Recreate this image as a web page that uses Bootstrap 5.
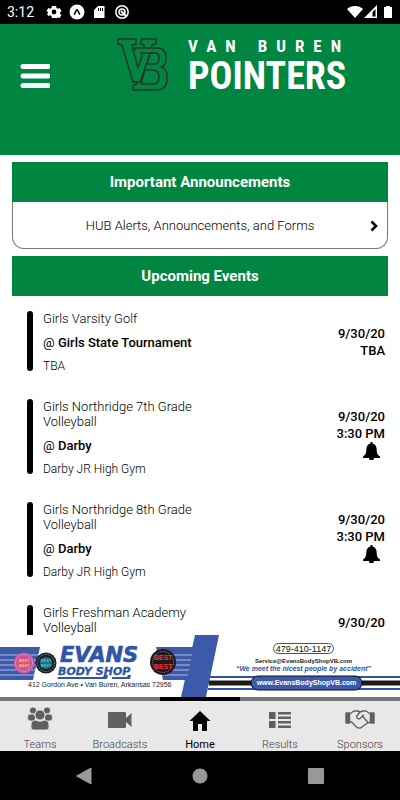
<!DOCTYPE html>
<html lang="en">
<head>
<meta charset="utf-8">
<meta name="viewport" content="width=device-width, initial-scale=1">
<title>Van Buren Pointers</title>
<link href="https://cdn.jsdelivr.net/npm/bootstrap@5.3.0/dist/css/bootstrap.min.css" rel="stylesheet">
<style>
  :root { --team-green: #008641; }
  body { font-family: Roboto, "Liberation Sans", sans-serif; font-size: 13px; font-weight: 300; line-height: 15px; color: #000; background: #fff; }
  svg { display: block; }
  .status-bar { background: #000; color: #fff; height: 24px; font-size: 14px; font-weight: 400; padding: 0 7px; }
  .team-header { background: var(--team-green); padding: 12px 20px 57px; }
  .menu-btn { margin-top: 14px; }
  .team-brand { gap: 20px; margin: 2px 0 0 67px; color: #fff; font-family: "Roboto Condensed", "Liberation Sans Narrow", "DejaVu Sans Condensed", sans-serif; font-weight: 700; }
  .brand-city { font-size: 17px; line-height: 16px; letter-spacing: 9px; white-space: nowrap; }
  .brand-name { font-size: 38px; line-height: 44px; }
  .section-title { background: var(--team-green); color: #fff; font-size: 15px; font-weight: 700; line-height: 20px; padding: 10px; margin: 0; }
  .announcements { margin: 7px 0; }
  .announce-link { font-size: 13px; color: #000; border: 1px solid #777; border-top: 0; border-radius: 0 0 12px 12px; padding: 16px 9px 15px; }
  .event-list { margin-top: 15px; padding: 0 3px 0 15px; gap: 26px; }
  .event-bar { width: 6px; border-radius: 3px; background: #000; margin: 0 10px 2px 0; }
  .event-text { width: 160px; }
  .event-place { margin: 9px 0; font-weight: 400; }
  .event-place b { font-weight: 500; }
  .event-venue { font-size: 12px; line-height: 14px; }
  .event-when { line-height: 17px; font-weight: 500; font-size: 13px; }
  .bell-btn { margin: 0 5px 8px 0; }
  .tab-bar { background: #e8e8e8; border-top: 4px solid #777; }
  .tab-link { color: #404040; font-size: 11px; line-height: 12px; padding: 6px 0 0; height: 50px; }
  .tab-link.active { color: #000; margin-top: -4px; border-top: 4px solid #000; height: 54px; font-weight: 400; }
  .system-bar { background: #000; height: 49px; padding: 0 26px; }
</style>
<script src="https://cdn.jsdelivr.net/npm/bootstrap@5.3.0/dist/js/bootstrap.bundle.min.js"></script>
</head>
<body class="d-flex flex-column vh-100 overflow-hidden">

<div class="status-bar d-flex align-items-center justify-content-between flex-shrink-0">
  <div class="d-flex align-items-center">
    <span class="me-2 pe-1">3:12</span>
    <svg width="84" height="16" viewBox="0 0 84 16" fill="#fff">
      <path fill-rule="evenodd" d="M6 2h4l.5 2 1.300.8 1.900-.7 1.800 3-1.500 1.300v1.400l1.500 1.300-1.800 3-1.900-.7-1.300.8L10 14H6l-.5-1.900-1.300-.8-1.900.7-1.800-3L2 9.700V8.300L.5 7l1.800-3 1.900.7L5.500 4ZM8 5.600a2.400 2.400 0 1 0 0 4.800 2.400 2.400 0 0 0 0-4.800Z"/>
      <circle cx="31" cy="8" r="7.500"/><path d="M28 10.500c1.500-1 2-5 3-5s1.500 4 3 5" fill="none" stroke="#000" stroke-width="1.600"/>
      <path fill-rule="evenodd" d="M52 2h6.500v12H48V6Zm0 2v3h1V4Zm2 0v3h1V4Zm2 0v3h1V4Z"/>
      <g fill="none" stroke="#fff" stroke-width="1.500"><circle cx="76" cy="8" r="6.200"/><circle cx="76" cy="8" r="3"/><path d="m75 7 5 5" stroke-width="2"/></g>
    </svg>
  </div>
  <svg width="46" height="14" viewBox="0 0 46 14" fill="#fff">
    <path d="M0 4C4 0 12 0 16 4L8 13Z"/>
    <path d="M30 0v13H17Z"/><path d="M28.500 4v7.500h-3V7Z" fill="#000"/>
    <path d="M37 2h2V1h4v1h2v11h-8Z"/>
  </svg>
</div>

<header class="team-header d-flex align-items-start flex-shrink-0">
  <button type="button" class="menu-btn btn p-0 border-0" aria-label="Menu" data-bs-toggle="button">
    <svg width="30" height="48" viewBox="0 0 30 48"><path d="M3 16.500h25M3 26h25M3 35.500h25" stroke="#fff" stroke-width="5" stroke-linecap="round"/></svg>
  </button>
  <div class="team-brand d-flex">
    <svg width="51" height="54" viewBox="0 0 51 54" fill="none" stroke="#27332b" stroke-width="1.400" stroke-linejoin="round" aria-hidden="true">
      <path d="M1 1h18v5l-4 1 2 8 4 15 4-12-1-3h12"/>
      <path d="M19 12 17 10M24 1h15v5l-4 1-1 3M24 1v5l3 1v3"/>
      <path d="M1 1v5l4 1 11 37h7l10-28"/>
      <path d="M17 10h23c7 0 9 4 9 9v3c0 4-2 6-5 7 4 1 6 4 6 9v3c0 7-4 11-11 11H16v-5l4-1v-3"/>
      <path d="M33 15h5c3 0 4 2 4 5s-1 6-4 6h-8ZM28 32h8c4 0 6 3 6 7s-2 7-6 7H24Z"/>
    </svg>
    <div>
      <div class="brand-city">VAN BUREN</div>
      <div class="brand-name">POINTERS</div>
    </div>
  </div>
</header>

<main class="flex-grow-1 overflow-hidden px-2" style="min-height:0">
  <div class="px-1">
    <section class="announcements text-center">
      <h2 class="section-title">Important Announcements</h2>
      <a href="#announcements" class="announce-link d-flex align-items-center text-decoration-none">
        <span class="flex-grow-1 ps-2">HUB Alerts, Announcements, and Forms</span>
        <svg width="8" height="12" viewBox="0 0 8 12" fill="none" stroke="#000" stroke-width="2.600"><path d="m1.500 1.500 4.500 4.500-4.500 4.500"/></svg>
      </a>
    </section>
    <section>
      <h2 class="section-title text-center">Upcoming Events</h2>
      <div class="event-list d-flex flex-column">
        <article class="d-flex">
          <div class="event-bar"></div>
          <div class="event-text">
            <div>Girls Varsity Golf</div>
            <div class="event-place">@ <b>Girls State Tournament</b></div>
            <div class="event-venue">TBA</div>
          </div>
          <div class="event-when ms-auto text-end align-self-center">9/30/20<br>TBA</div>
        </article>
        <article class="d-flex">
          <div class="event-bar"></div>
          <div class="event-text">
            <div>Girls Northridge 7th Grade Volleyball</div>
            <div class="event-place">@ <b>Darby</b></div>
            <div class="event-venue">Darby JR High Gym</div>
          </div>
          <div class="event-when ms-auto align-self-center d-flex flex-column align-items-end">
            <span>9/30/20</span><span>3:30 PM</span>
            <button type="button" class="bell-btn btn p-0 border-0" aria-label="Set reminder">
              <svg width="17" height="18" viewBox="0 0 17 18"><path d="M7.500 0h2v1.500c3 .7 4.200 3 4.200 6 0 4 1 5.500 3.300 7V16h-6a2.500 2.500 0 0 1-5 0H0v-1.500c2.300-1.500 3.300-3 3.300-7 0-3 1.200-5.300 4.200-6Z"/></svg>
            </button>
          </div>
        </article>
        <article class="d-flex">
          <div class="event-bar"></div>
          <div class="event-text">
            <div>Girls Northridge 8th Grade Volleyball</div>
            <div class="event-place">@ <b>Darby</b></div>
            <div class="event-venue">Darby JR High Gym</div>
          </div>
          <div class="event-when ms-auto align-self-center d-flex flex-column align-items-end">
            <span>9/30/20</span><span>3:30 PM</span>
            <button type="button" class="bell-btn btn p-0 border-0" aria-label="Set reminder">
              <svg width="17" height="18" viewBox="0 0 17 18"><path d="M7.500 0h2v1.500c3 .7 4.200 3 4.200 6 0 4 1 5.500 3.300 7V16h-6a2.500 2.500 0 0 1-5 0H0v-1.500c2.300-1.500 3.300-3 3.300-7 0-3 1.200-5.300 4.200-6Z"/></svg>
            </button>
          </div>
        </article>
        <article class="d-flex">
          <div class="event-bar"></div>
          <div class="event-text">
            <div>Girls Freshman Academy Volleyball</div>
            <div class="event-place">@ <b>Darby</b></div>
            <div class="event-venue">Darby JR High Gym</div>
          </div>
          <div class="event-when ms-auto align-self-center d-flex flex-column align-items-end">
            <span>9/30/20</span><span>3:30 PM</span>
            <button type="button" class="bell-btn btn p-0 border-0" aria-label="Set reminder">
              <svg width="17" height="18" viewBox="0 0 17 18"><path d="M7.500 0h2v1.500c3 .7 4.200 3 4.200 6 0 4 1 5.500 3.300 7V16h-6a2.500 2.500 0 0 1-5 0H0v-1.500c2.300-1.500 3.300-3 3.300-7 0-3 1.200-5.300 4.200-6Z"/></svg>
            </button>
          </div>
        </article>
      </div>
    </section>
  </div>
</main>

<a href="#sponsor" class="d-block flex-shrink-0 bg-white" aria-label="Evans Body Shop">
  <svg class="w-100 h-auto" viewBox="0 0 400 62" font-family="Liberation Sans, sans-serif" font-weight="400">
    <g fill="#3c5aa9">
      <path d="M0 12h40l-7 33H0ZM156 12h38l-5 33h-26Z"/>
      <path d="M195 0h24l-13 62h-25Z"/>
    </g>
    <path d="M0 20h40M0 25h40M0 30h40M0 35h40M0 40h40M156 20h36M156 25h35M156 30h34M156 35h33M156 40h32" stroke="#fff" stroke-opacity=".6"/>
    <g><circle cx="24" cy="28" r="10.500" fill="#c9569f"/><circle cx="24" cy="28" r="8.500" fill="none" stroke="#f0b9dc" stroke-dasharray="1 1"/><circle cx="24" cy="28" r="6" fill="#d9519a"/></g>
    <g><circle cx="46" cy="28" r="10.500" fill="#1b2226"/><circle cx="46" cy="28" r="8.500" fill="none" stroke="#7f9ba5" stroke-dasharray="1 1"/><circle cx="46" cy="28" r="6" fill="#256d7d"/></g>
    <g><circle cx="163" cy="27" r="13" fill="#1d1a1b"/><circle cx="163" cy="27" r="10.500" fill="none" stroke="#8c8586" stroke-dasharray="1 1"/></g>
    <g font-weight="700" text-anchor="middle">
      <g font-size="4" fill="#ffc23d"><text x="24" y="27">BEST</text><text x="24" y="32">BEST</text></g>
      <g font-size="4" fill="#42c3d8"><text x="46" y="27">BEST</text><text x="46" y="32">BEST</text></g>
      <g font-size="7" fill="#f0303f"><text x="163" y="25">BEST</text><text x="163" y="34">BEST</text></g>
    </g>
    <g fill="#2f55a8" font-family="DejaVu Sans, sans-serif" font-weight="700" font-style="italic">
      <text x="60" y="27" font-size="21" stroke="#2f55a8" stroke-width=".6">EVANS</text>
      <text x="58" y="40" font-size="11" stroke="#2f55a8" stroke-width=".3">BODY SHOP</text>
      <path d="M58 42h45l1-2h4l-1 4H57.500ZM112 42h15l1-2h3l-1 4h-18Z"/>
    </g>
    <text x="28" y="52" font-size="7" fill="#222">412 Gordon Ave • Van Buren, Arkansas 72956</text>
    <rect x="273.500" y="8.500" width="60" height="10" rx="5" fill="#fff" stroke="#2f55a8"/>
    <g text-anchor="middle">
      <text x="303.500" y="17" font-size="9" fill="#111">479-410-1147</text>
      <text x="303.500" y="28" font-size="6" font-weight="700" fill="#222">Service@EvansBodyShopVB.com</text>
      <text x="303.500" y="36" font-size="7" font-weight="700" font-style="italic" fill="#2f55a8">“We meet the nicest people by accident”</text>
    </g>
    <path d="M210 42h190M208 54h192" stroke="#2f55a8" stroke-width="2"/>
    <path d="M209 48h191" stroke="#1b1b1b" stroke-width="5"/>
    <rect x="251" y="41" width="111" height="14" rx="7" fill="#3c5aa9" stroke="#111"/>
    <text x="306.500" y="50" font-size="7" font-weight="700" fill="#fff" text-anchor="middle">www.EvansBodyShopVB.com</text>
  </svg>
</a>

<nav class="tab-bar nav nav-fill flex-nowrap flex-shrink-0" aria-label="Main">
  <a href="#teams" class="tab-link col d-flex flex-column align-items-center justify-content-between text-decoration-none">
    <svg width="26" height="24" viewBox="0 0 26 24" fill="#606060" stroke="#e8e8e8" stroke-width=".8">
      <circle cx="6" cy="3.500" r="3.500"/><circle cx="20" cy="3.500" r="3.500"/><rect x=".5" y="7" width="8" height="7" rx="3"/><rect x="17.500" y="7" width="8" height="7" rx="3"/><circle cx="13" cy="8" r="5"/><path d="M8 13q5 2.500 10 0c4 1 4 4 4 7 0 2-1 3-3 3H7c-2 0-3-1-3-3 0-3 0-6 4-7Z"/>
    </svg>Teams
  </a>
  <a href="#broadcasts" class="tab-link col d-flex flex-column align-items-center justify-content-between text-decoration-none">
    <svg width="24" height="24" viewBox="0 0 24 24" fill="#606060"><path d="M1 5h16q1 0 1 1v5l5.500-5v14L18 15v5q0 1-1 1H1q-1 0-1-1V6q0-1 1-1Z"/></svg>Broadcasts
  </a>
  <a href="#home" aria-current="page" class="tab-link active col d-flex flex-column align-items-center justify-content-between text-decoration-none">
    <svg width="22" height="24" viewBox="0 0 22 24"><path d="M11 4 21.500 14H18v10h-5v-7H9v7H4V14H.5Z"/></svg>Home
  </a>
  <a href="#results" class="tab-link col d-flex flex-column align-items-center justify-content-between text-decoration-none">
    <svg width="24" height="24" viewBox="0 0 24 24" fill="#606060"><path d="M1 5h6.500v7H1ZM1 14h6.500v7H1ZM10 5h13v2.500H10ZM10 9.500h13V12H10ZM10 14h13v2.500H10ZM10 18.500h13V21H10Z"/></svg>Results
  </a>
  <a href="#sponsors" class="tab-link col d-flex flex-column align-items-center justify-content-between text-decoration-none">
    <svg width="30" height="24" viewBox="0 0 30 24" fill="none" stroke="#606060" stroke-width="1.400" stroke-linejoin="round" stroke-linecap="round">
      <path d="M1 6h3.500v10H1ZM25.500 6H29v10h-3.500Z" fill="#606060"/>
      <path d="M4.500 7 9 4h4l2 1 3-1h3l4.500 3M4.500 15h2l5 5q2 1.500 4 1l7-5 3-1M15 5l-3.500 4.500q.5 3 3.500 2l2.500-2.500 5 6M17.500 9l1-1"/>
    </svg>Sponsors
  </a>
</nav>

<div class="system-bar d-flex align-items-center flex-shrink-0">
  <button type="button" class="btn p-0 border-0 col d-flex justify-content-center" aria-label="Back"><svg width="16" height="18" viewBox="0 0 16 18" fill="#999"><path d="M15 1v16L.5 9Z" stroke="#999" stroke-linejoin="round"/></svg></button>
  <button type="button" class="btn p-0 border-0 col d-flex justify-content-center" aria-label="Home screen"><svg width="16" height="16" viewBox="0 0 16 16" fill="#999"><circle cx="8" cy="8" r="7.500"/></svg></button>
  <button type="button" class="btn p-0 border-0 col d-flex justify-content-center" aria-label="Recent apps"><svg width="16" height="16" viewBox="0 0 16 16" fill="#999"><rect width="16" height="16" rx="1"/></svg></button>
</div>
</body>
</html>
